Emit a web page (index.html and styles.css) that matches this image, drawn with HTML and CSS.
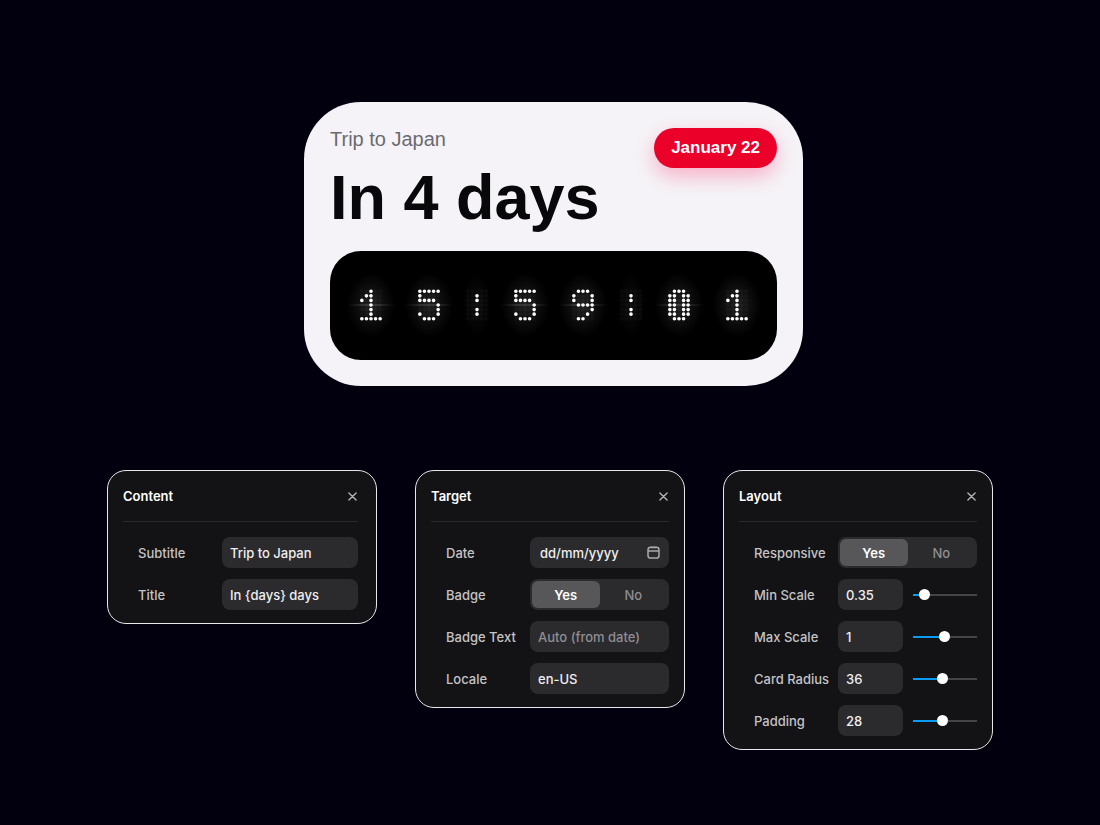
FILE: index.html
```html
<!DOCTYPE html>
<html lang="en">
<head>
<meta charset="utf-8">
<meta name="viewport" content="width=device-width, initial-scale=1">
<title>Countdown</title>
<link rel="stylesheet" href="styles.css">
</head>
<body>
<svg class="defs" width="0" height="0" aria-hidden="true">
  <defs>
    <pattern id="dots" width="1" height="1" x="-0.5" y="-0.5" patternUnits="userSpaceOnUse"><circle cx="0.5" cy="0.5" r="0.4" fill="#fff"/></pattern>
    <g id="grid"><rect x="-0.5" y="-0.5" width="5" height="7" fill="url(#dots)"/></g>
    <path id="d0" d="M1 0h0M2 0h0M3 0h0M0 1h0M1 1h0M3 1h0M4 1h0M0 2h0M1 2h0M3 2h0M4 2h0M0 3h0M1 3h0M3 3h0M4 3h0M0 4h0M1 4h0M3 4h0M4 4h0M0 5h0M1 5h0M3 5h0M4 5h0M1 6h0M2 6h0M3 6h0"/>
    <path id="d1" d="M2 0h0M1 1h0M2 1h0M0 2h0M2 2h0M2 3h0M2 4h0M2 5h0M0 6h0M1 6h0M2 6h0M3 6h0M4 6h0"/>
    <path id="d5" d="M0 0h0M1 0h0M2 0h0M3 0h0M4 0h0M0 1h0M0 2h0M1 2h0M2 2h0M3 2h0M4 3h0M4 4h0M0 5h0M4 5h0M1 6h0M2 6h0M3 6h0"/>
    <path id="d9" d="M1 0h0M2 0h0M3 0h0M0 1h0M4 1h0M0 2h0M4 2h0M1 3h0M2 3h0M3 3h0M4 3h0M4 4h0M3 5h0M1 6h0M2 6h0"/>
    <path id="colon" d="M2 1h0M2 2h0M2 4h0M2 5h0"/>
  </defs>
</svg>
<main class="page">
  <section class="hero">
    <article class="card">
      <header class="card-head">
        <div>
          <p class="subtitle">Trip to Japan</p>
          <h1 class="title">In 4 days</h1>
        </div>
        <span class="badge">January 22</span>
      </header>
      <div class="clock" role="timer" aria-label="15:59:01">
        <svg class="digit" viewBox="-3.25 -4 10.5 14"><use class="ghost" href="#grid"/><use href="#d1"/></svg>
        <svg class="digit" viewBox="-3.25 -4 10.5 14"><use class="ghost" href="#grid"/><use href="#d5"/></svg>
        <svg class="digit sep" viewBox="-1.0625 -4 6.125 14"><use class="ghost" href="#grid"/><use href="#colon"/></svg>
        <svg class="digit" viewBox="-3.25 -4 10.5 14"><use class="ghost" href="#grid"/><use href="#d5"/></svg>
        <svg class="digit" viewBox="-3.25 -4 10.5 14"><use class="ghost" href="#grid"/><use href="#d9"/></svg>
        <svg class="digit sep" viewBox="-1.0625 -4 6.125 14"><use class="ghost" href="#grid"/><use href="#colon"/></svg>
        <svg class="digit" viewBox="-3.25 -4 10.5 14"><use class="ghost" href="#grid"/><use href="#d0"/></svg>
        <svg class="digit still" viewBox="-3.25 -4 10.5 14"><use class="ghost" href="#grid"/><use href="#d1"/></svg>
      </div>
    </article>
  </section>

  <section class="panels">
    <form class="panel panel-content">
      <header class="panel-head">
        <h2>Content</h2>
        <button class="close" type="button" aria-label="Close"><svg viewBox="0 0 10 10"><path d="M1 1l8 8M9 1l-8 8"/></svg></button>
      </header>
      <div class="fields">
        <label for="subtitle">Subtitle</label>
        <input class="field" id="subtitle" type="text" value="Trip to Japan">
        <label for="title">Title</label>
        <input class="field" id="title" type="text" value="In {days} days">
      </div>
    </form>

    <form class="panel">
      <header class="panel-head">
        <h2>Target</h2>
        <button class="close" type="button" aria-label="Close"><svg viewBox="0 0 10 10"><path d="M1 1l8 8M9 1l-8 8"/></svg></button>
      </header>
      <div class="fields">
        <label for="date">Date</label>
        <div class="field date">
          <input id="date" type="text" placeholder="dd/mm/yyyy">
          <button type="button" aria-label="Open calendar"><svg viewBox="0 0 13 13"><rect x="1" y="1.2" width="11" height="10.8" rx="2.6"/><path d="M1 5h11M3.5 1.6h6"/></svg></button>
        </div>
        <span id="badge-label">Badge</span>
        <div class="segment" role="radiogroup" aria-labelledby="badge-label">
          <label><input type="radio" name="badge" checked><span>Yes</span></label>
          <label><input type="radio" name="badge"><span>No</span></label>
        </div>
        <label for="badge-text">Badge Text</label>
        <input class="field" id="badge-text" type="text" placeholder="Auto (from date)">
        <label for="locale">Locale</label>
        <input class="field" id="locale" type="text" value="en-US">
      </div>
    </form>

    <form class="panel">
      <header class="panel-head">
        <h2>Layout</h2>
        <button class="close" type="button" aria-label="Close"><svg viewBox="0 0 10 10"><path d="M1 1l8 8M9 1l-8 8"/></svg></button>
      </header>
      <div class="fields">
        <span id="responsive-label">Responsive</span>
        <div class="segment" role="radiogroup" aria-labelledby="responsive-label">
          <label><input type="radio" name="responsive" checked><span>Yes</span></label>
          <label><input type="radio" name="responsive"><span>No</span></label>
        </div>
        <label for="min-scale">Min Scale</label>
        <div class="pair">
          <input class="field" id="min-scale" type="text" inputmode="decimal" value="0.35">
          <input class="slider" type="range" aria-label="Min Scale slider" min="0.2" max="1.4" step="0.05" value="0.35" style="--fill:18%">
        </div>
        <label for="max-scale">Max Scale</label>
        <div class="pair">
          <input class="field" id="max-scale" type="text" inputmode="decimal" value="1">
          <input class="slider" type="range" aria-label="Max Scale slider" min="0" max="2" step="0.05" value="1" style="--fill:50%">
        </div>
        <label for="radius">Card Radius</label>
        <div class="pair">
          <input class="field" id="radius" type="text" inputmode="numeric" value="36">
          <input class="slider" type="range" aria-label="Card Radius slider" min="0" max="80" value="36" style="--fill:45%">
        </div>
        <label for="padding">Padding</label>
        <div class="pair">
          <input class="field" id="padding" type="text" inputmode="numeric" value="28">
          <input class="slider" type="range" aria-label="Padding slider" min="0" max="60" value="28" style="--fill:47%">
        </div>
      </div>
    </form>
  </section>
</main>
</body>
</html>
```
FILE: styles.css
```css
* { box-sizing: border-box; }

body {
  margin: 0;
  background: #02000f;
  color: #fff;
  font: 500 13px/16px Inter, "Liberation Sans", sans-serif;
}

h1, h2, p { margin: 0; }
input, button { font: inherit; color: inherit; }
button { border: 0; padding: 0; background: none; cursor: pointer; }
.defs { position: absolute; }

.page {
  display: flex;
  flex-direction: column;
  gap: 84px;
  padding: 102px 16px 75px;
}

/* Countdown card */
.hero {
  display: flex;
  justify-content: center;
  padding-left: 7px;
}
.card {
  width: 100%;
  max-width: 499px;
  padding: 26px;
  border-radius: 57px;
  background: #f5f3f7;
  color: #08080a;
  font-family: "Liberation Sans", Arial, sans-serif;
}
.card-head {
  display: flex;
  justify-content: space-between;
  align-items: flex-start;
}
.subtitle {
  color: #6c6a6f;
  font-size: 20px;
  font-weight: 400;
  line-height: 22px;
}
.title {
  margin: 11px 0 18px;
  font-size: 63px;
  font-weight: 700;
  line-height: 72px;
}
.badge {
  padding: 0 17px;
  border-radius: 20px;
  background: #ea0029;
  box-shadow: 0 8px 20px rgba(255, 0, 80, 0.28);
  color: #fff;
  font-size: 17px;
  font-weight: 700;
  line-height: 40px;
  white-space: nowrap;
}
.clock {
  display: flex;
  justify-content: center;
  align-items: center;
  gap: 10px;
  padding: 22px 16px 23px;
  border-radius: 31px;
  background: #000;
}
.digit {
  flex: 0 1 48px;
  width: 48px;
  height: 64px;
  overflow: visible;
  background:
    linear-gradient(90deg, transparent, rgba(255, 255, 255, 0.1) 30%, rgba(255, 255, 255, 0.1) 70%, transparent) center / 100% 2px no-repeat,
    radial-gradient(closest-side, rgba(255, 255, 255, 0.13), rgba(255, 255, 255, 0.05) 55%, transparent);
  fill: none;
  stroke: #fff;
  stroke-width: 0.8;
  stroke-linecap: round;
}
.digit.still {
  background: radial-gradient(closest-side, rgba(255, 255, 255, 0.12), transparent);
}
.digit.sep {
  flex-basis: 28px;
  width: 28px;
  background: radial-gradient(closest-side, rgba(255, 255, 255, 0.05), transparent);
}
.ghost {
  stroke: none;
  opacity: 0.03;
}

/* Settings panels */
.panels {
  display: grid;
  grid-template-columns: repeat(3, minmax(0, 270px));
  justify-content: center;
  align-items: start;
  gap: 38px;
}
.panel {
  padding: 0 15px 13px;
  border: 1px solid #e8e7ea;
  border-radius: 19px;
  background: #131214;
}
.panel-content { padding-right: 18px; }
.panel-head {
  display: flex;
  justify-content: space-between;
  align-items: center;
  height: 51px;
  border-bottom: 1px solid #29282b;
}
.panel-head h2 {
  font-size: 13px;
  font-weight: 600;
  line-height: 16px;
}
.close {
  display: flex;
  padding: 1px;
}
.close svg {
  width: 9px;
  height: 9px;
  fill: none;
  stroke: #b4b3b7;
  stroke-width: 1.5;
  stroke-linecap: round;
}
.fields {
  display: grid;
  grid-template-columns: 84px minmax(0, 1fr);
  align-items: center;
  row-gap: 11px;
  padding: 15px 0 0 15px;
  color: #c4c3c6;
  white-space: nowrap;
}
.field {
  width: 100%;
  min-width: 0;
  height: 31px;
  padding: 0 8px;
  border: 0;
  border-radius: 8px;
  background: #2b2a2d;
  color: #efeef0;
}
.field::placeholder { color: #8f8e92; opacity: 1; }
.date {
  display: flex;
  align-items: center;
  padding: 0 9px 0 10px;
}
.date input {
  flex: 1;
  min-width: 0;
  padding: 0;
  border: 0;
  background: none;
}
.date input::placeholder { color: #efeef0; opacity: 1; }
.date button { display: flex; }
.date svg {
  width: 13px;
  height: 13px;
  fill: none;
  stroke: #a9a8ac;
  stroke-width: 1.5;
}
.segment {
  display: grid;
  grid-template-columns: 1fr 1fr;
  height: 31px;
  padding: 2px;
  border-radius: 8px;
  background: #2b2a2d;
}
.segment label { display: grid; cursor: pointer; }
.segment input {
  grid-area: 1 / 1;
  appearance: none;
  margin: 0;
  border-radius: 6px;
}
.segment input:checked { background: #575659; }
.segment span {
  grid-area: 1 / 1;
  place-self: center;
  color: #8f8e92;
}
.segment input:checked + span { color: #fff; font-weight: 600; }
.pair {
  display: grid;
  grid-template-columns: 1fr 1fr;
  align-items: center;
  gap: 10px;
}
.slider {
  appearance: none;
  width: 100%;
  height: 12px;
  margin: 0;
  background: linear-gradient(90deg, #0a9bf5 var(--fill), #454347 var(--fill)) center / 100% 2px no-repeat;
}
.slider::-webkit-slider-thumb {
  appearance: none;
  width: 11px;
  height: 11px;
  border-radius: 50%;
  background: #fff;
}

@media (max-width: 760px) {
  .panels { grid-template-columns: minmax(0, 270px); }
}
```
